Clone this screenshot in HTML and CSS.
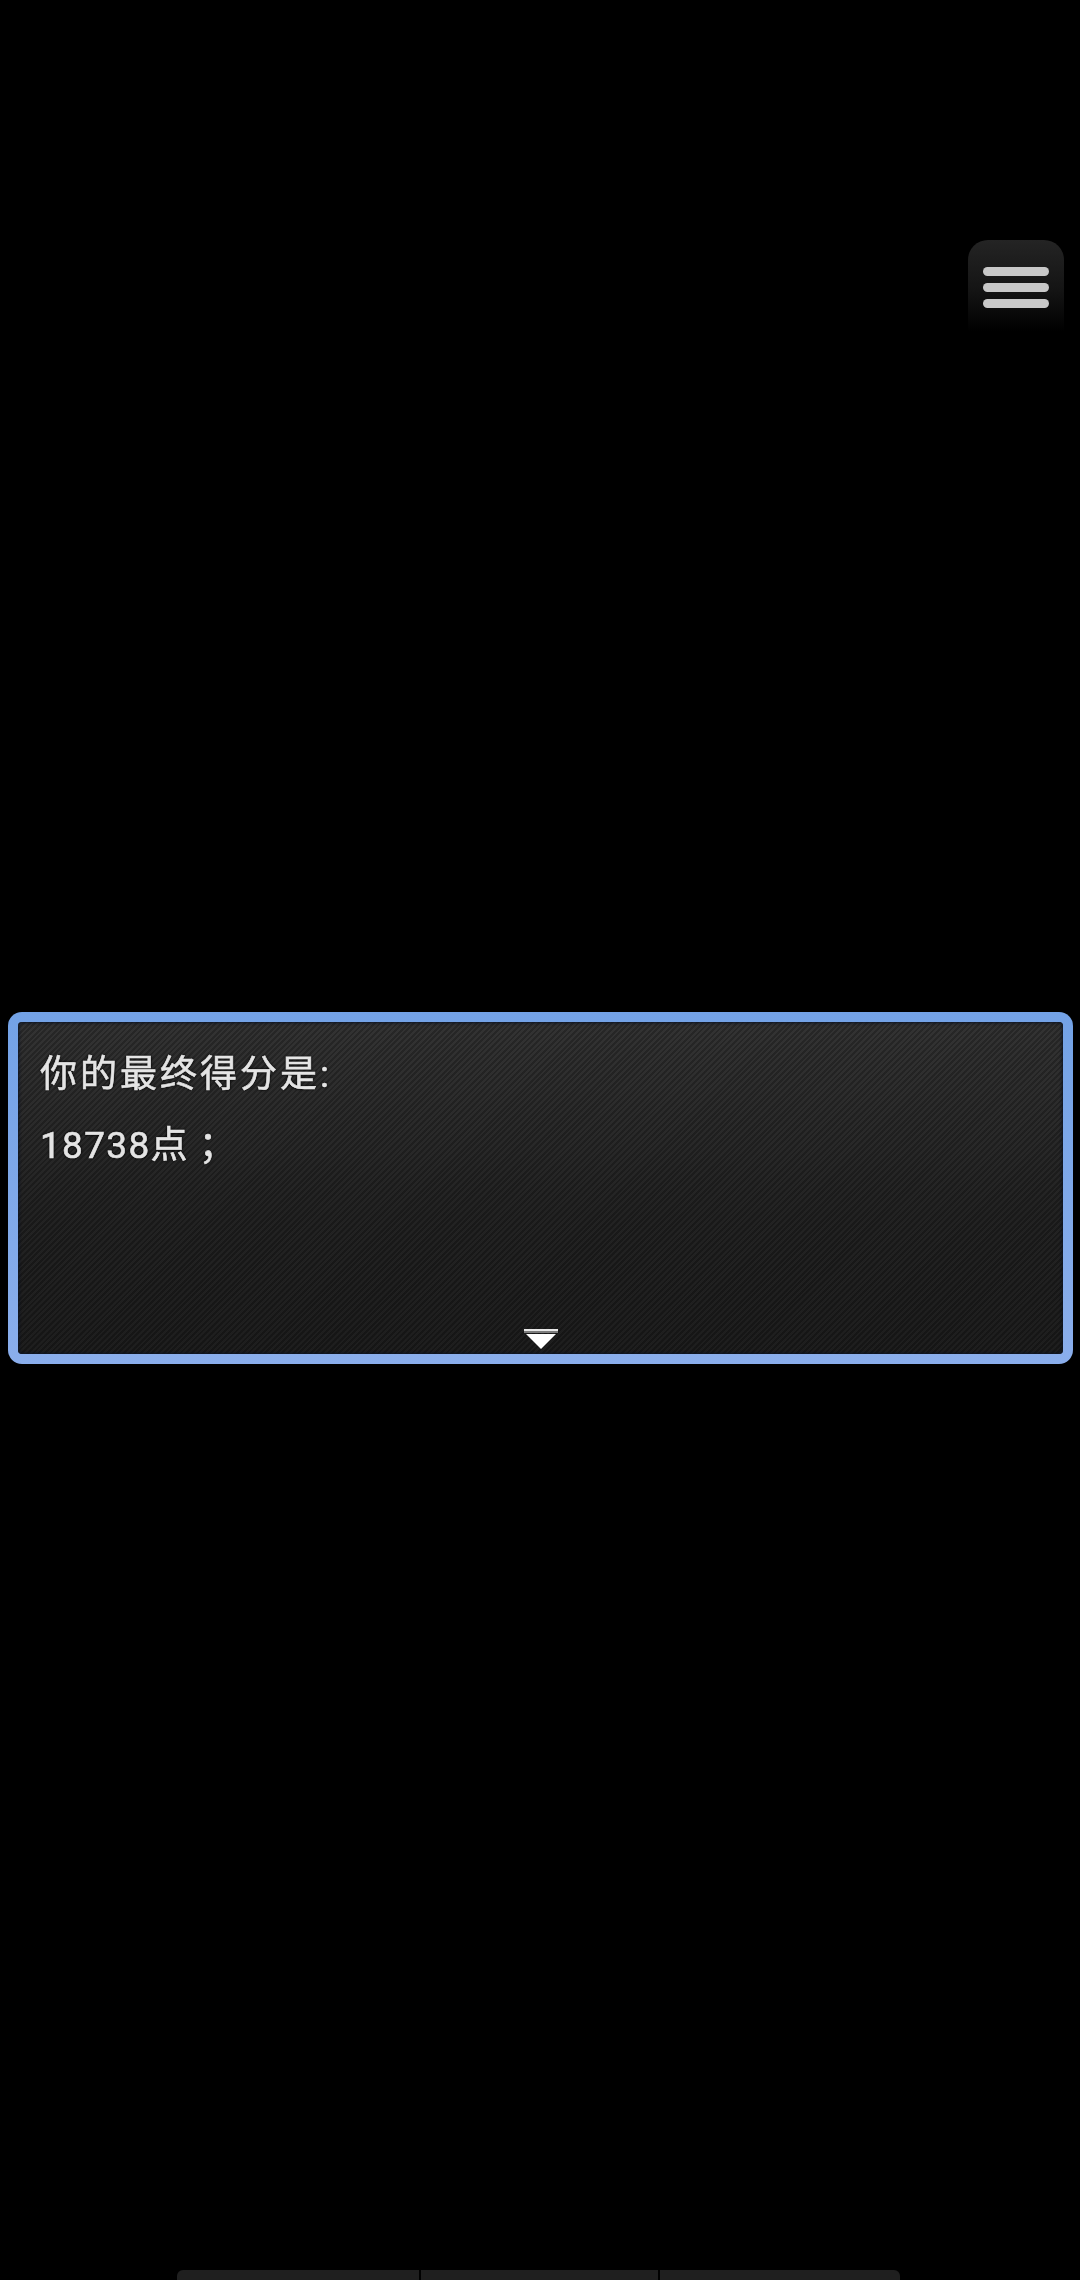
FILE: index.html
```html
<!DOCTYPE html>
<html lang="zh-CN">
  <head>
    <meta charset="UTF-8" />
    <meta name="viewport" content="width=device-width, initial-scale=1.0" />
    <title>最终得分</title>
    <link rel="stylesheet" href="styles.css">
  </head>
  <body>
    <div class="screen">
      <div class="top">
        <div class="menu-btn">
          <span class="line"></span>
          <span class="line"></span>
          <span class="line"></span>
        </div>
      </div>
      <div class="message">
        <p class="title">你的最终得分是:</p>
        <p class="score">18738点<span class="punct">；</span></p>
        <svg class="next" width="34" height="21" viewBox="0 0 34 21">
          <rect x="0" y="0" width="34" height="2" fill="#e8e8e8" />
          <rect x="0" y="2" width="34" height="2" fill="#7d7d7d" />
          <path d="M2 5H32L17 20Z" fill="#fff" />
        </svg>
      </div>
      <div class="bottom-bar">
        <span class="seg"></span>
        <span class="seg"></span>
        <span class="seg"></span>
      </div>
    </div>
  </body>
</html>
```

FILE: styles.css
```css
html,
body {
  margin: 0;
  background-color: #000;
}
.screen {
  width: 1080px;
  height: 2280px;
  display: flex;
  flex-direction: column;
  overflow: hidden;
}
.top {
  display: flex;
  justify-content: flex-end;
  padding: 240px 16px 0 0;
}
.menu-btn {
  width: 96px;
  height: 92px;
  box-sizing: border-box;
  padding-top: 27px;
  display: flex;
  flex-direction: column;
  align-items: center;
  gap: 7px;
  border-radius: 20px 20px 0 0;
  background: linear-gradient(#242424, #141414 55%, #000);
}
.menu-btn .line {
  width: 66px;
  height: 9px;
  border-radius: 5px;
  background-color: #c8c8c8;
  filter: blur(0.6px);
}
.message {
  margin: 680px 7px 0 8px;
  height: 352px;
  box-sizing: border-box;
  padding: 31px 22px 4px;
  display: flex;
  flex-direction: column;
  border: 10px solid transparent;
  border-radius: 14px;
  background:
    repeating-linear-gradient(135deg, rgba(0, 0, 0, 0.2) 0 2px, rgba(255, 255, 255, 0.015) 2px 4px) padding-box,
    linear-gradient(#303030, #1f1f1f 60%, #1a1a1a) padding-box,
    linear-gradient(#73a2e6, #8aaeec) border-box;
  box-shadow: inset 0 0 3px 1px #0c1424;
  color: #e4e4e4;
  font-family: Roboto, "Noto Sans CJK SC", sans-serif;
  font-size: 37px;
  -webkit-text-stroke: 0.6px #e4e4e4;
  text-shadow: 0 0 3px #000, 0 0 2px #000;
}
.message p {
  margin: 0;
  line-height: 44px;
  filter: blur(0.5px);
}
.title {
  letter-spacing: 3px;
}
.message .score {
  margin-top: 23px;
  letter-spacing: 1.3px;
}
.punct {
  margin-left: 10px;
  font-family: "Noto Sans CJK TC", sans-serif;
}
.next {
  margin: auto auto 0;
  display: block;
}
.bottom-bar {
  margin: auto 0 0 177px;
  height: 10px;
  display: grid;
  grid-template-columns: 242px 237px 240px;
  gap: 2px;
}
.bottom-bar .seg {
  background-color: #1f1f1f;
}
.bottom-bar .seg:first-child {
  border-radius: 6px 0 0 0;
}
.bottom-bar .seg:last-child {
  border-radius: 0 6px 0 0;
}
```
